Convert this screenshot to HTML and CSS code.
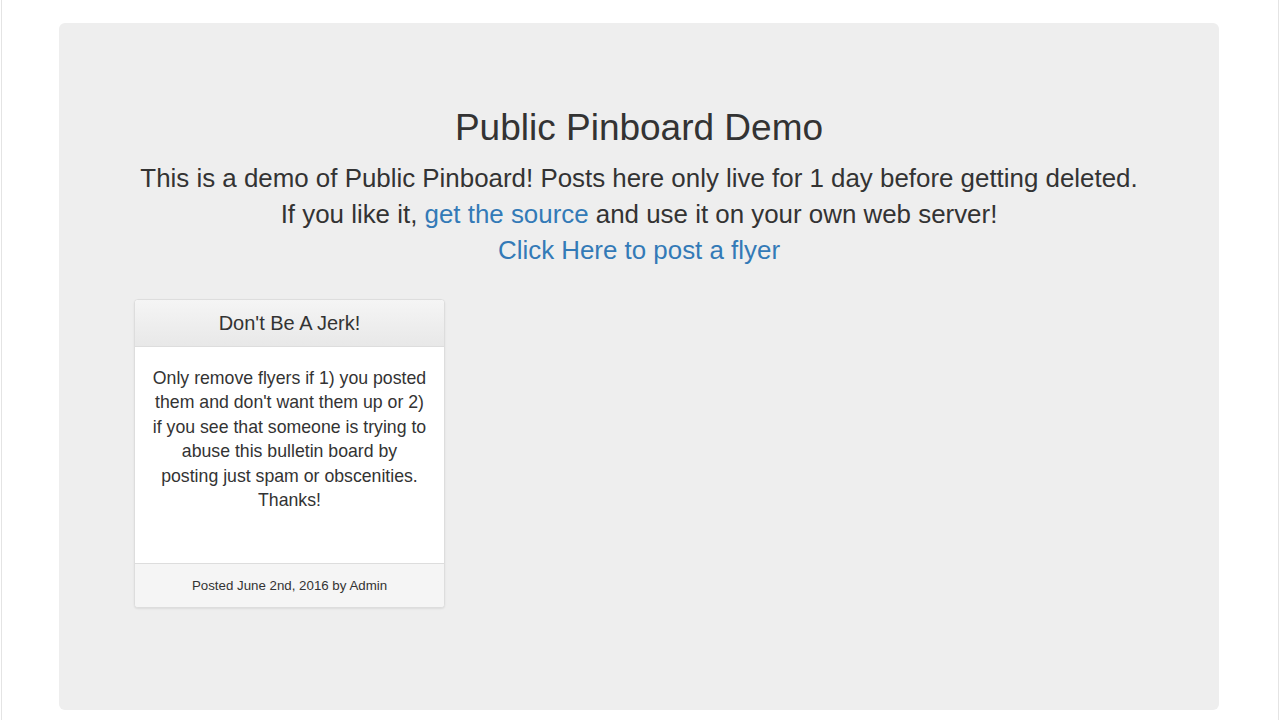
FILE: index.html
```html
<!DOCTYPE html>
<html>
<head>
<meta charset="utf-8">
<link rel="stylesheet" href="styles.css">
</head>
<body>
<div class="frame">
  <div class="jumbotron">
    <h1 class="title">Public Pinboard Demo</h1>
    <p class="lead">This is a demo of Public Pinboard! Posts here only live for 1 day before getting deleted.<br>
    If you like it, <a href="#">get the source</a> and use it on your own web server!<br>
    <a href="#">Click Here to post a flyer</a></p>
    <div class="board">
      <div class="flyer">
        <div class="flyer-head">Don't Be A Jerk!</div>
        <div class="flyer-body">Only remove flyers if 1) you posted them and don't want them up or 2) if you see that someone is trying to abuse this bulletin board by posting just spam or obscenities. Thanks!</div>
        <div class="flyer-foot">Posted June 2nd, 2016 by Admin</div>
      </div>
    </div>
  </div>
</div>
</body>
</html>
```
FILE: styles.css
```css
html, body {
  margin: 0;
  padding: 0;
  background: #fff;
}
body {
  font-family: "Liberation Sans", Arial, sans-serif;
  color: #333;
}
.frame {
  margin: 0 1px;
  border-left: 1px solid #e4e4e4;
  border-right: 1px solid #e4e4e4;
  height: 720px;
  box-sizing: border-box;
  padding-top: 23px;
  overflow: hidden;
}
.jumbotron {
  margin-left: 57px;
  width: 1160px;
  height: 687px;
  box-sizing: border-box;
  background: #eee;
  border-radius: 6px;
  padding: 85px 75px 0;
}
.title {
  margin: 0;
  font-size: 37px;
  font-weight: 500;
  line-height: 40px;
  text-align: center;
  color: #333;
}
.lead {
  margin: 12px 0 0;
  font-size: 25.9px;
  line-height: 36px;
  text-align: center;
  font-weight: 300;
}
.lead a {
  color: #337ab7;
  text-decoration: none;
}
.board {
  margin-top: 31px;
  display: flex;
}
.flyer {
  width: 311px;
  box-sizing: border-box;
  border: 1px solid #ddd;
  border-radius: 4px;
  background: #fff;
  box-shadow: 0 1px 2px rgba(0,0,0,0.08);
  overflow: hidden;
}
.flyer-head {
  padding: 10px 15px;
  font-size: 20px;
  line-height: 26px;
  text-align: center;
  background: linear-gradient(#f5f5f5, #e8e8e8);
  border-bottom: 1px solid #ddd;
}
.flyer-body {
  height: 216px;
  box-sizing: border-box;
  padding: 19px 17px 0;
  font-size: 17.7px;
  line-height: 24.4px;
  text-align: center;
}
.flyer-foot {
  border-top: 1px solid #ddd;
  background: #f5f5f5;
  height: 43px;
  font-size: 13.3px;
  line-height: 43px;
  text-align: center;
}
```
